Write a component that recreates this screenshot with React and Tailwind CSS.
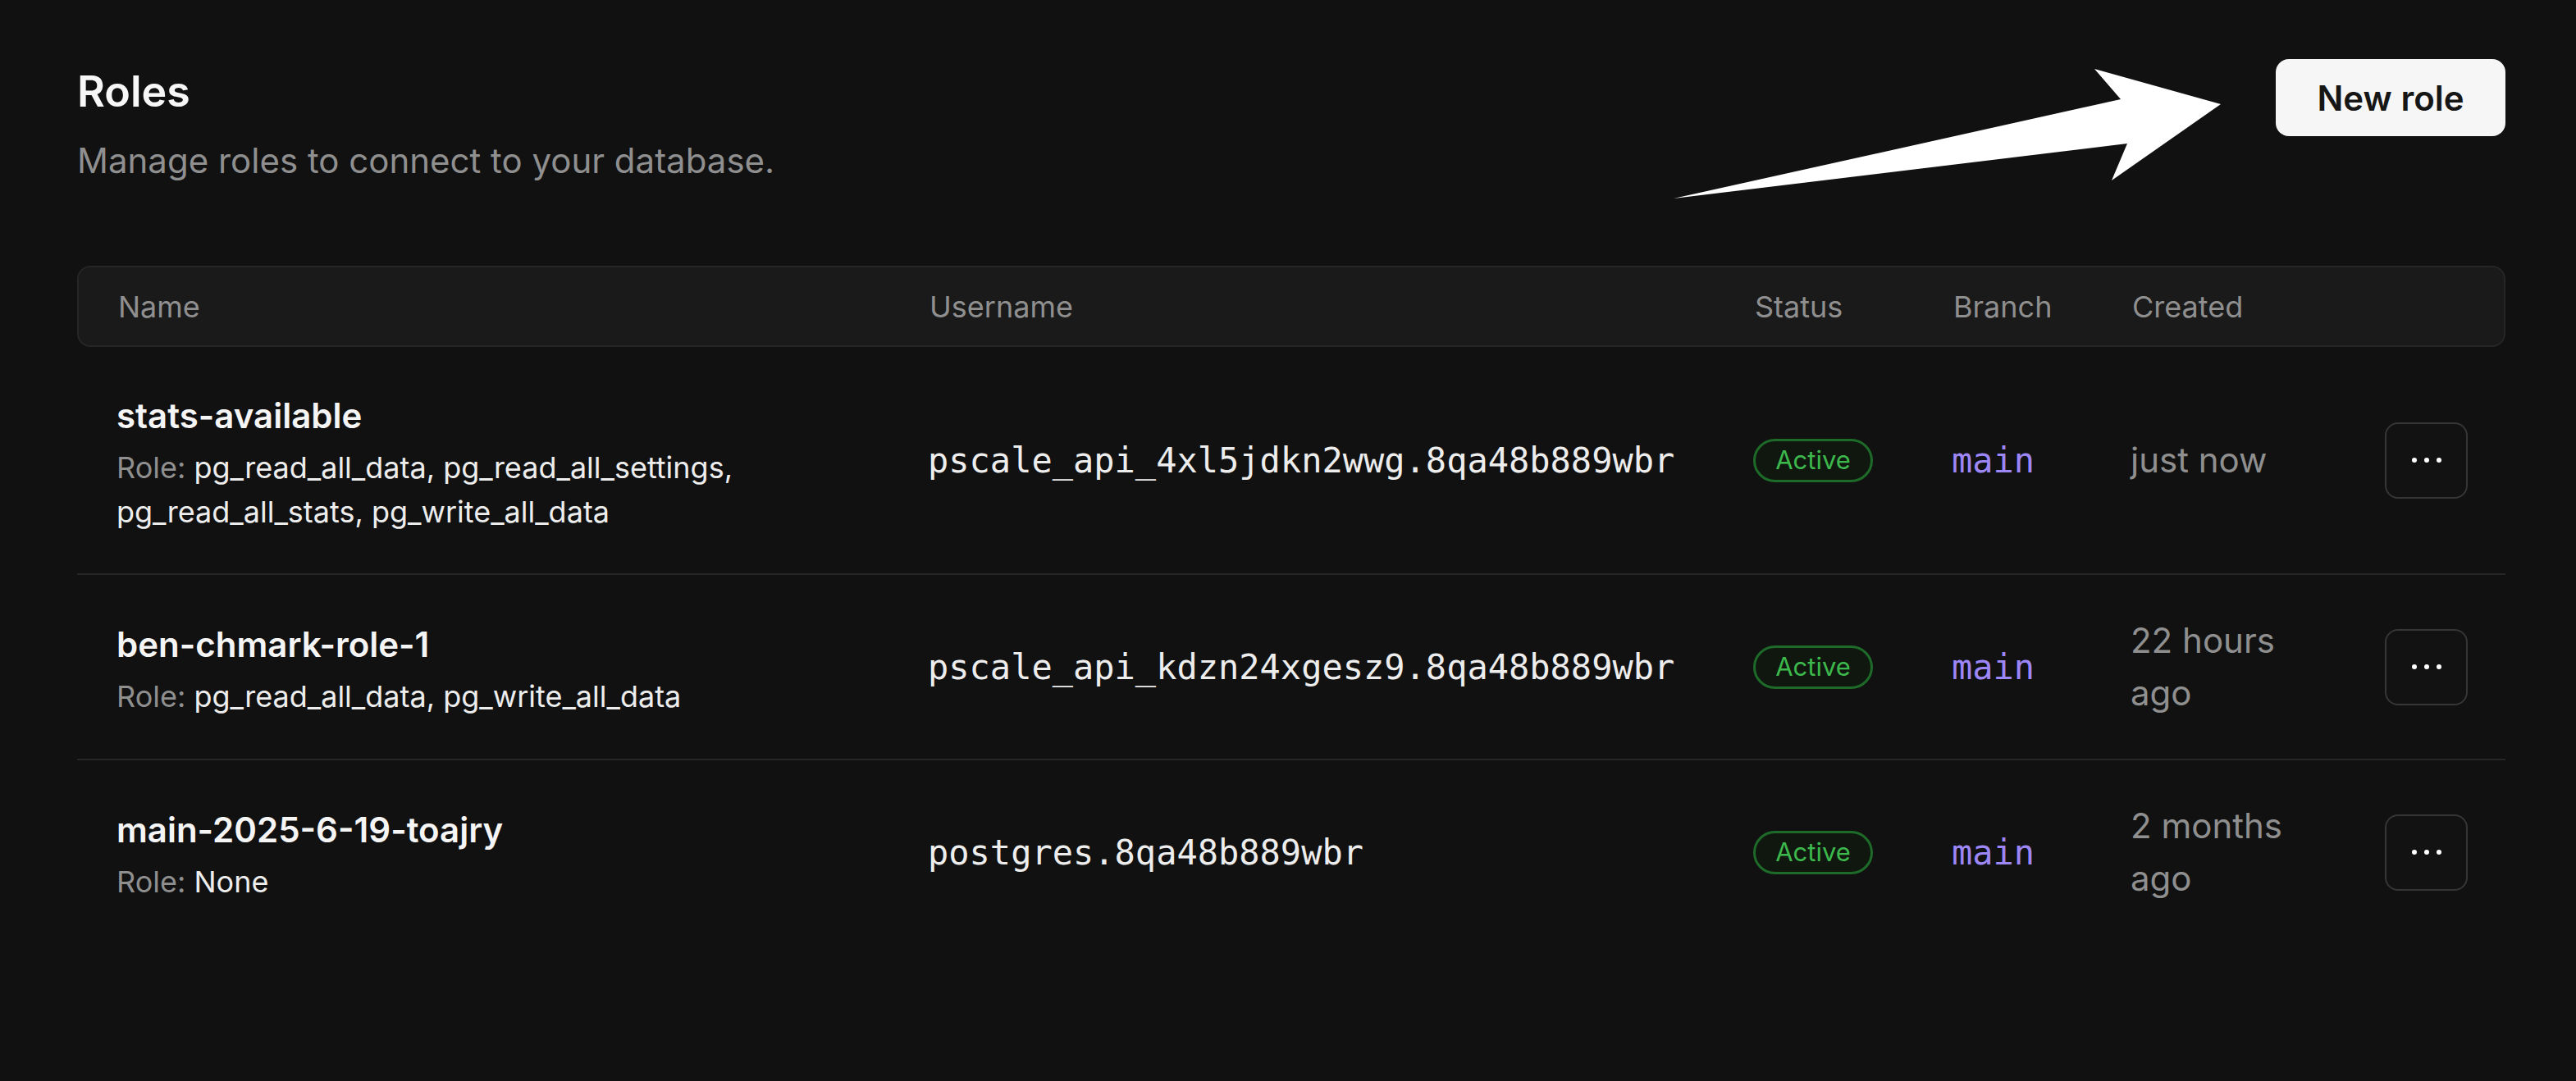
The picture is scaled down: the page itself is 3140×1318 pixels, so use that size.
import React from "react";

const roles = [
  {
    name: "stats-available",
    role: "pg_read_all_data, pg_read_all_settings, pg_read_all_stats, pg_write_all_data",
    username: "pscale_api_4xl5jdkn2wwg.8qa48b889wbr",
    branch: "main",
    created: "just now",
  },
  {
    name: "ben-chmark-role-1",
    role: "pg_read_all_data, pg_write_all_data",
    username: "pscale_api_kdzn24xgesz9.8qa48b889wbr",
    branch: "main",
    created: "22 hours ago",
  },
  {
    name: "main-2025-6-19-toajry",
    role: "None",
    username: "postgres.8qa48b889wbr",
    branch: "main",
    created: "2 months ago",
  },
];

const cols = "grid grid-cols-[989px_1006px_242px_218px_309px_102px] pl-[48px] pr-[46px]";

const Arrow = () => (
  <svg
    className="absolute left-[2000px] top-[60px]"
    width="740"
    height="200"
    viewBox="0 0 740 200"
  >
    <polygon
      points="40,182 585,61 553,24 707,67 574,160 593,115"
      fill="#ffffff"
    />
  </svg>
);

const MoreButton = () => (
  <button className="flex h-[93px] w-[101px] items-center justify-center gap-[9px] rounded-[16px] border-2 border-[#363636] bg-[#121212]">
    <span className="h-[6px] w-[6px] rounded-full bg-white" />
    <span className="h-[6px] w-[6px] rounded-full bg-white" />
    <span className="h-[6px] w-[6px] rounded-full bg-white" />
  </button>
);

const RoleRow = ({ item, last }) => (
  <div
    className={`${cols} items-center py-[48px] ${
      last ? "" : "border-b-2 border-[#262626]"
    }`}
  >
    <div className="pr-[36px]">
      <div className="text-[42px] leading-[72px] font-semibold text-[#f5f5f5]">
        {item.name}
      </div>
      <p className="text-[36px] leading-[54px]">
        <span className="text-[#8f8f8f]">Role: </span>
        <span className="text-[#ededed]">{item.role}</span>
      </p>
    </div>
    <div className="font-['DejaVu_Sans_Mono',monospace] text-[42px] text-[#ededed]">
      {item.username}
    </div>
    <div>
      <span className="inline-flex h-[53px] w-[146px] items-center justify-center rounded-full border-[3px] border-[#1d6a29] bg-[#0f170f] text-[31px] text-[#3db84c]">
        Active
      </span>
    </div>
    <div className="font-['DejaVu_Sans_Mono',monospace] text-[42px] text-[#9d87f7]">
      {item.branch}
    </div>
    <div className="max-w-[236px] text-[42px] leading-[64px] text-[#8f8f8f]">
      {item.created}
    </div>
    <div className="flex justify-end">
      <MoreButton />
    </div>
  </div>
);

export default function App() {
  return (
    <div className="relative min-h-screen bg-[#111111] font-['Inter',sans-serif]">
      <div className="pl-[94px] pr-[86px] pt-[72px]">
        <div className="flex items-start justify-between">
          <div className="mt-[8px]">
            <h1 className="text-[52px] leading-[64px] font-semibold text-[#f7f7f7]">
              Roles
            </h1>
            <p className="mt-[26px] text-[42px] leading-[52px] text-[#8f8f8f]">
              Manage roles to connect to your database.
            </p>
          </div>
          <button className="h-[94px] w-[280px] rounded-[16px] bg-[#f6f6f6] text-[42px] font-semibold text-[#161616]">
            New role
          </button>
        </div>

        <div className="mt-[102px]">
          <div
            className={`${cols} h-[99px] items-center rounded-[16px] border-2 border-[#262626] bg-[#1a1a1a] text-[36px] text-[#8f8f8f]`}
          >
            <div>Name</div>
            <div>Username</div>
            <div>Status</div>
            <div>Branch</div>
            <div>Created</div>
            <div />
          </div>
          {roles.map((item, i) => (
            <RoleRow key={item.name} item={item} last={i === roles.length - 1} />
          ))}
        </div>
      </div>
      <Arrow />
    </div>
  );
}
